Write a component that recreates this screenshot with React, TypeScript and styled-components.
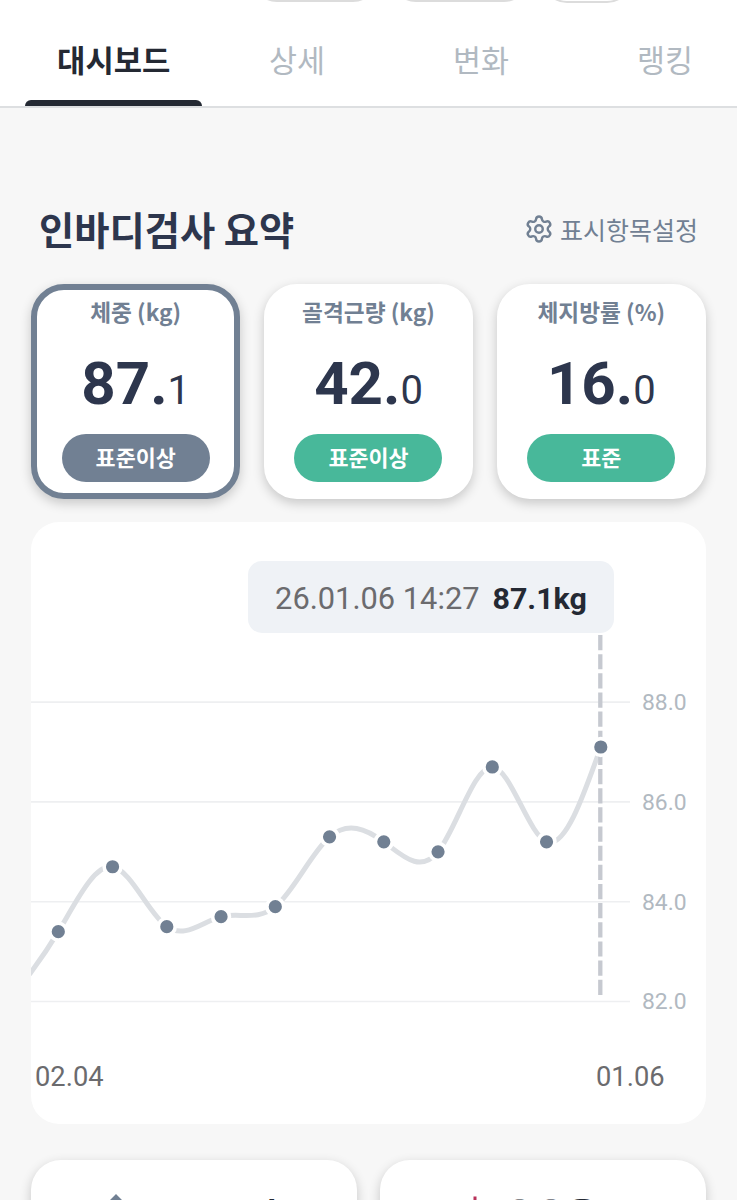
import React from "react";
import styled, { createGlobalStyle } from "styled-components";
import { Settings as GearIcon } from "lucide-react";

const Global = createGlobalStyle`
  * { box-sizing: border-box; }
  body {
    margin: 0;
    background: #f7f7f7;
    font-family: Roboto, "Noto Sans CJK KR", sans-serif;
  }
`;

const Screen = styled.div`
  width: 737px;
  height: 1200px;
  overflow: hidden;
  display: flex;
  flex-direction: column;
  background: #f7f7f7;
`;

const Header = styled.header`
  height: 108px;
  flex: none;
  display: flex;
  flex-direction: column;
  justify-content: space-between;
  background: #fff;
  border-bottom: 2px solid #dddfe1;
`;

const ChipRow = styled.div`
  height: 3px;
  overflow: hidden;
  display: flex;
  align-items: flex-end;
  gap: 13px;
  padding-left: 252px;
`;

const Chip = styled.div<{ $width: number; $lift: number }>`
  width: ${(p) => p.$width}px;
  height: 50px;
  flex: none;
  margin-bottom: ${(p) => p.$lift}px;
  border: 2px solid #dcdcdc;
  border-radius: 25px;
`;

const Tabs = styled.nav`
  display: flex;
  padding-left: 21px;
  height: 103px;
`;

const Tab = styled.button<{ $active?: boolean }>`
  width: 184px;
  flex: none;
  padding: 36px 4px 0;
  border: 0;
  background: none;
  display: flex;
  flex-direction: column;
  justify-content: space-between;
  align-items: center;
  font: ${(p) => (p.$active ? "700 30.8px" : "400 30.4px")} / 40px "Noto Sans CJK KR", sans-serif;
  text-indent: ${(p) => (p.$active ? "1.5px" : "0")};
  color: ${(p) => (p.$active ? "#242933" : "#b1b9c1")};

  &::after {
    content: "";
    width: 177px;
    height: 6px;
    border-radius: 6px 6px 0 0;
    background: ${(p) => (p.$active ? "#242933" : "transparent")};
  }
`;

const Main = styled.main`
  padding: 96px 31px 0;
  display: flex;
  flex-direction: column;
`;

const TitleRow = styled.div`
  height: 50px;
  padding: 0 8px;
  display: flex;
  align-items: center;
  justify-content: space-between;
`;

const Title = styled.h1`
  margin: 0;
  font: 700 38.3px/50px "Noto Sans CJK KR", sans-serif;
  color: #2d364d;
`;

const Settings = styled.button`
  border: 0;
  padding: 0;
  background: none;
  display: flex;
  align-items: center;
  gap: 6px;
  font: 400 25px/40px "Noto Sans CJK KR", sans-serif;
  color: #718093;
`;

const Cards = styled.div`
  margin-top: 30px;
  display: flex;
  justify-content: space-between;
`;

const Card = styled.section<{ $selected?: boolean }>`
  width: 209.4px;
  height: 215px;
  border: 6px solid ${(p) => (p.$selected ? "#718093" : "#fff")};
  border-radius: 33px;
  background: #fff;
  box-shadow: 0 4px 12px rgba(0, 0, 0, 0.2);
  display: flex;
  flex-direction: column;
  align-items: center;
`;

const CardLabel = styled.div`
  margin-top: 6px;
  font: 700 22.7px/32px "Noto Sans CJK KR", sans-serif;
  color: #718093;
`;

const Value = styled.div`
  margin-top: 21px;
  height: 70px;
  font: 700 60px/70px Roboto, sans-serif;
  color: #2d364d;
`;

const Decimal = styled.span`
  font-size: 40px;
  font-weight: 400;
`;

const Badge = styled.div<{ $color: string }>`
  margin-top: 15px;
  width: 148px;
  height: 48px;
  border-radius: 24px;
  background: ${(p) => p.$color};
  color: #fff;
  text-align: center;
  font: 700 21.8px/46px "Noto Sans CJK KR", sans-serif;
`;

const ChartCard = styled.section`
  position: relative;
  margin-top: 23px;
  height: 602px;
  border-radius: 28px;
  background: #fff;
  overflow: hidden;
`;

const Plot = styled.svg`
  display: block;
  font-family: Roboto, sans-serif;
`;

const Tooltip = styled.div`
  position: absolute;
  left: 217px;
  top: 39px;
  width: 366px;
  height: 72px;
  padding-top: 3px;
  border-radius: 14px;
  background: #eff2f6;
  display: flex;
  align-items: center;
  justify-content: center;
  gap: 13px;
  font: 400 30.8px/40px Roboto, sans-serif;
  color: #6b6b6e;
  white-space: nowrap;
`;

const Strong = styled.strong`
  font-weight: 700;
  font-size: 30.4px;
  color: #242933;
`;

const BottomRow = styled.div`
  margin-top: 36px;
  display: flex;
  justify-content: space-between;
`;

const BottomCard = styled.section<{ $gap: number }>`
  width: 326px;
  height: 120px;
  border-radius: 30px;
  background: #fff;
  box-shadow: 0 4px 12px rgba(0, 0, 0, 0.2);
  display: flex;
  align-items: flex-start;
  gap: ${(p) => p.$gap}px;
  padding: 30px 0 0 70px;
  color: #242933;
`;

const BottomLabel = styled.span<{ $size: number }>`
  font: 700 ${(p) => p.$size}px/48px "Noto Sans CJK KR", sans-serif;
  white-space: nowrap;
`;

const metrics = [
  { label: "체중 (kg)", whole: "87.", decimal: "1", status: "표준이상", color: "#718093", selected: true },
  { label: "골격근량 (kg)", whole: "42.", decimal: "0", status: "표준이상", color: "#48b89a" },
  { label: "체지방률 (%)", whole: "16.", decimal: "0", status: "표준", color: "#48b89a" },
];

const weights = [81.9, 83.4, 84.7, 83.5, 83.7, 83.9, 85.3, 85.2, 85.0, 86.7, 85.2, 87.1];
const STEP = 54.25;
const xAt = (i: number) => 27.3 + (i - 1) * STEP;
const yAt = (v: number) => 479.5 - (v - 82) * 49.9;

// Natural cubic spline through evenly spaced points, written as Bezier segments.
function splinePath(values: number[]) {
  const y = values.map(yAt);
  const n = y.length;
  const diag = y.map((_, i) => (i === 0 || i === n - 1 ? 2 : 4));
  const rhs = y.map((_, i) => 3 * (y[Math.min(i + 1, n - 1)] - y[Math.max(i - 1, 0)]));
  for (let i = 1; i < n; i++) {
    const w = 1 / diag[i - 1];
    diag[i] -= w;
    rhs[i] -= w * rhs[i - 1];
  }
  const m = new Array<number>(n);
  m[n - 1] = rhs[n - 1] / diag[n - 1];
  for (let i = n - 2; i >= 0; i--) m[i] = (rhs[i] - m[i + 1]) / diag[i];
  let d = `M${xAt(0)} ${y[0]}`;
  for (let i = 0; i < n - 1; i++) {
    d += ` C${xAt(i) + STEP / 3} ${y[i] + m[i] / 3} ${xAt(i + 1) - STEP / 3} ${y[i + 1] - m[i + 1] / 3} ${xAt(i + 1)} ${y[i + 1]}`;
  }
  return d;
}

const ArrowUpIcon = () => (
  <svg width="30" height="38" viewBox="0 -4 30 38">
    <path d="M15 0 27 12h-6v21H9V12H3z" fill="#718093" />
  </svg>
);

const MarkIcon = () => (
  <svg width="50" height="38" viewBox="0 -4 50 38">
    <path d="M25 2.5v26M15 18l10 10 10-10" fill="none" stroke="#b8325a" strokeWidth="3" />
  </svg>
);

export default function App() {
  return (
    <Screen>
      <Global />
      <Header>
        <ChipRow>
          <Chip $width={126} $lift={1} />
          <Chip $width={138} $lift={1} />
          <Chip $width={90} $lift={0} />
        </ChipRow>
        <Tabs>
          <Tab $active>대시보드</Tab>
          <Tab>상세</Tab>
          <Tab>변화</Tab>
          <Tab>랭킹</Tab>
        </Tabs>
      </Header>
      <Main>
        <TitleRow>
          <Title>인바디검사 요약</Title>
          <Settings>
            <GearIcon size={30} strokeWidth={1.95} />
            표시항목설정
          </Settings>
        </TitleRow>
        <Cards>
          {metrics.map((m) => (
            <Card key={m.label} $selected={m.selected}>
              <CardLabel>{m.label}</CardLabel>
              <Value>
                {m.whole}
                <Decimal>{m.decimal}</Decimal>
              </Value>
              <Badge $color={m.color}>{m.status}</Badge>
            </Card>
          ))}
        </Cards>
        <ChartCard>
          <Plot width="675" height="602" viewBox="0 0 675 602">
            {[88, 86, 84, 82].map((v) => (
              <g key={v}>
                <line x1="0" x2="599" y1={yAt(v)} y2={yAt(v)} stroke="#eeeff1" strokeWidth="1.6" />
                <text x="611" y={yAt(v) + 7.8} fontSize="22.9" fill="#b1b9c1">
                  {v.toFixed(1)}
                </text>
              </g>
            ))}
            <path d={splinePath(weights)} fill="none" stroke="#dbdee2" strokeWidth="5" />
            <line x1="569.3" x2="569.3" y1="113" y2="474.5" stroke="#c6c9d0" strokeWidth="4.3" strokeDasharray="15.2 3.95" />
            {weights.slice(1).map((v, i) => (
              <circle key={i} cx={xAt(i + 1)} cy={yAt(v)} r="8.4" fill="#718093" stroke="#fff" strokeWidth="3.6" />
            ))}
            <text x="4" y="564" fontSize="27.3" fill="#6b6b6e">02.04</text>
            <text x="565" y="564" fontSize="27.3" fill="#6b6b6e">01.06</text>
          </Plot>
          <Tooltip>
            <span>26.01.06 14:27</span>
            <Strong>87.1kg</Strong>
          </Tooltip>
        </ChartCard>
        <BottomRow>
          <BottomCard $gap={18}>
            <ArrowUpIcon />
            <BottomLabel $size={35}>근육부위</BottomLabel>
          </BottomCard>
          <BottomCard $gap={4}>
            <MarkIcon />
            <BottomLabel $size={34}>운용율</BottomLabel>
          </BottomCard>
        </BottomRow>
      </Main>
    </Screen>
  );
}
